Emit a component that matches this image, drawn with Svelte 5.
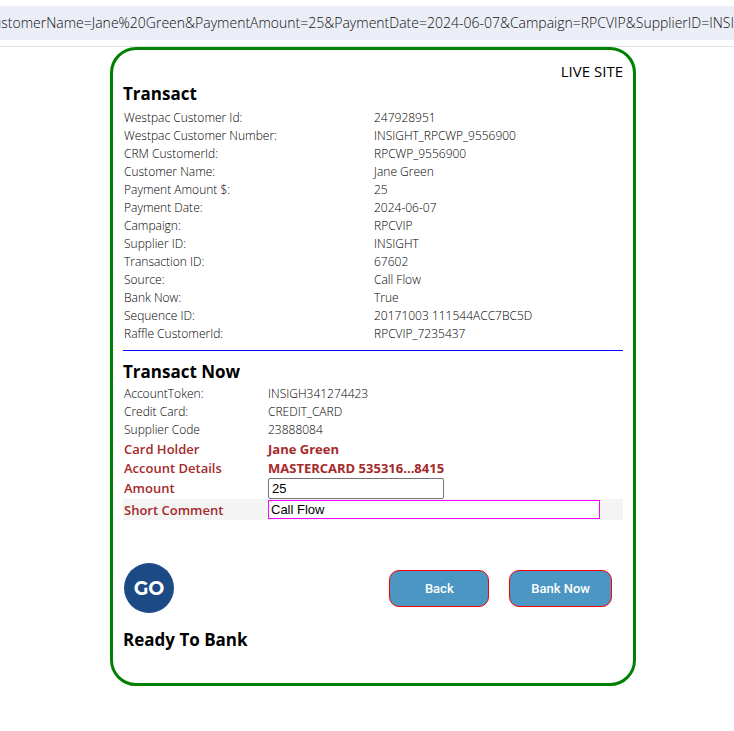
<script>
  const url =
    'ustomerName=Jane%20Green&PaymentAmount=25&PaymentDate=2024-06-07&Campaign=RPCVIP&SupplierID=INSIGHT';

  const details = [
    ['Westpac Customer Id:', '247928951'],
    ['Westpac Customer Number:', 'INSIGHT_RPCWP_9556900'],
    ['CRM CustomerId:', 'RPCWP_9556900'],
    ['Customer Name:', 'Jane Green'],
    ['Payment Amount $:', '25'],
    ['Payment Date:', '2024-06-07'],
    ['Campaign:', 'RPCVIP'],
    ['Supplier ID:', 'INSIGHT'],
    ['Transaction ID:', '67602'],
    ['Source:', 'Call Flow'],
    ['Bank Now:', 'True'],
    ['Sequence ID:', '20171003 111544ACC7BC5D'],
    ['Raffle CustomerId:', 'RPCVIP_7235437']
  ];

  const account = [
    ['AccountToken:', 'INSIGH341274423'],
    ['Credit Card:', 'CREDIT_CARD'],
    ['Supplier Code', '23888084']
  ];

  const holder = [
    ['Card Holder', 'Jane Green'],
    ['Account Details', 'MASTERCARD 535316...8415']
  ];

  let amount = $state('25');
  let comment = $state('Call Flow');
</script>

<header>
  <div class="url">{url}</div>
</header>

<main>
  <form class="card" onsubmit={(e) => e.preventDefault()}>
    <div class="site">LIVE SITE</div>

    <h2>Transact</h2>
    <table class="details">
      <tbody>
        {#each details as [label, value]}
          <tr><th scope="row">{label}</th><td>{value}</td></tr>
        {/each}
      </tbody>
    </table>

    <hr />

    <h2>Transact Now</h2>
    <table class="payment">
      <tbody>
        {#each account as [label, value]}
          <tr><th scope="row">{label}</th><td>{value}</td></tr>
        {/each}
        {#each holder as [label, value]}
          <tr class="strong"><th scope="row">{label}</th><td>{value}</td></tr>
        {/each}
        <tr class="strong field">
          <th scope="row"><label for="amount">Amount</label></th>
          <td><input id="amount" class="amount" type="text" bind:value={amount} /></td>
        </tr>
        <tr class="strong field shaded">
          <th scope="row"><label for="comment">Short Comment</label></th>
          <td><input id="comment" class="comment" type="text" bind:value={comment} /></td>
        </tr>
      </tbody>
    </table>

    <div class="actions">
      <button type="button" class="go">GO</button>
      <div class="buttons">
        <button type="button" class="action">Back</button>
        <button type="submit" class="action">Bank Now</button>
      </div>
    </div>

    <h2>Ready To Bank</h2>
  </form>
</main>

<style>
  :global(body) {
    background: #fff;
    color: #000;
    font-family: 'Segoe UI', 'Open Sans', 'Noto Sans', sans-serif;
  }

  header {
    padding: 6px 0;
    border-bottom: 1px solid #e0e0e0;
  }

  .url {
    height: 34px;
    overflow: hidden;
    background: #ebeef7;
    color: #101010;
    font-size: 14px;
    font-weight: 300;
    line-height: 34px;
    text-indent: -7px;
    white-space: nowrap;
  }

  main {
    padding-left: 12px;
  }

  .card {
    box-sizing: border-box;
    max-width: 526px;
    margin: 0 auto;
    padding: 10px 10px 30px;
    border: 3px solid #008000;
    border-radius: 26px;
  }

  .site {
    font-size: 15px;
    line-height: 22px;
    text-align: right;
  }

  h2 {
    margin: 0 0 1px;
    font-size: 17px;
    font-weight: 700;
    line-height: 24px;
  }

  table {
    width: 100%;
    border-collapse: collapse;
    table-layout: fixed;
    font-size: 12px;
    line-height: 18px;
  }

  th,
  td {
    height: 18px;
    padding: 0 1px;
    font-weight: 300;
    text-align: left;
    white-space: nowrap;
  }

  .details {
    margin-top: 3px;
  }

  .details th {
    width: 248px;
  }

  .payment th {
    width: 142px;
  }

  hr {
    height: 1px;
    margin: 7px 0 9px;
    border: 0;
    background: #0000ff;
  }

  .strong th,
  .strong td {
    height: 19px;
    color: #a52a2a;
    font-size: 13px;
    font-weight: 700;
  }

  .strong th {
    font-weight: 600;
  }

  .strong.field th,
  .strong.field td {
    height: 22px;
  }

  .shaded {
    background: #f4f4f4;
  }

  .strong.shaded th,
  .strong.shaded td {
    height: 21px;
  }

  input {
    display: block;
    box-sizing: border-box;
    padding: 0 3px;
    background: #fff;
    color: #000;
    font: 13px 'Liberation Sans', Arial, sans-serif;
  }

  .amount {
    width: 176px;
    height: 21px;
    border: 1px solid #767676;
    border-radius: 2px;
  }

  .comment {
    width: 332px;
    height: 19px;
    padding: 0 2px;
    border: 1px solid #ff00ff;
  }

  .actions {
    display: flex;
    align-items: center;
    justify-content: space-between;
    margin: 43px 11px 15px 1px;
  }

  .buttons {
    display: flex;
    gap: 20px;
  }

  button {
    border: 0;
    color: #fff;
    cursor: pointer;
  }

  .go {
    width: 50px;
    height: 50px;
    padding: 0;
    border-radius: 50%;
    background: #1c4a84;
    font: 700 19px 'Montserrat', 'Open Sans', sans-serif;
  }

  .action {
    min-width: 100px;
    height: 37px;
    padding: 0 21px;
    border: 1px solid #ff0000;
    border-radius: 10px;
    background: #4b96c2;
    font: 500 13px Roboto, 'Liberation Sans', sans-serif;
  }
</style>
